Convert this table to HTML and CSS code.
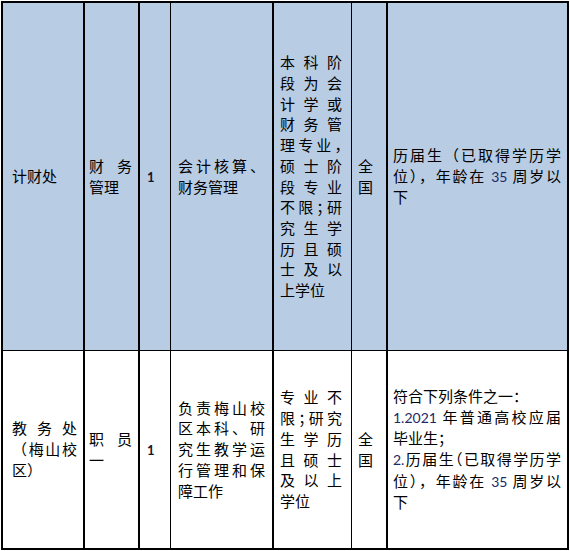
FILE: index.html
```html
<!DOCTYPE html>
<html lang="zh-CN">
<head>
<meta charset="utf-8">
<title>岗位表</title>
<link rel="stylesheet" href="styles.css">
</head>
<body>
<table class="sheet">
  <tr class="row-a">
    <td class="c1"><span class="l">计财处</span></td>
    <td class="c2"><span class="l j">财务</span><span class="l">管理</span></td>
    <td class="c3"><span class="one">1</span></td>
    <td class="c4"><span class="l j">会计核算、</span><span class="l">财务管理</span></td>
    <td class="c5">
      <span class="l j">本科阶</span>
      <span class="l j">段为会</span>
      <span class="l j">计学或</span>
      <span class="l j">财务管</span>
      <span class="l j">理专业<span class="h">，</span></span>
      <span class="l j">硕士阶</span>
      <span class="l j">段专业</span>
      <span class="l j">不限<span class="h">；</span>研</span>
      <span class="l j">究生学</span>
      <span class="l j">历且硕</span>
      <span class="l j">士及以</span>
      <span class="l">上学位</span>
    </td>
    <td class="c6"><span class="l">全</span><span class="l">国</span></td>
    <td class="c7">
      <span class="l j">历届生（已取得学历学</span>
      <span class="l j">位），年龄在 <span class="n">35</span> 周岁以</span>
      <span class="l">下</span>
    </td>
  </tr>
  <tr class="row-b">
    <td class="c1"><span class="l j">教务处</span><span class="l j">（梅山校</span><span class="l">区）</span></td>
    <td class="c2"><span class="l j">职员</span><span class="l">一</span></td>
    <td class="c3"><span class="one">1</span></td>
    <td class="c4">
      <span class="l j">负责梅山校</span>
      <span class="l j">区本科、研</span>
      <span class="l j">究生教学运</span>
      <span class="l j">行管理和保</span>
      <span class="l">障工作</span>
    </td>
    <td class="c5">
      <span class="l j">专业不</span>
      <span class="l j">限<span class="h">；</span>研究</span>
      <span class="l j">生学历</span>
      <span class="l j">且硕士</span>
      <span class="l j">及以上</span>
      <span class="l">学位</span>
    </td>
    <td class="c6"><span class="l">全</span><span class="l">国</span></td>
    <td class="c7">
      <span class="l">符合下列条件之一：</span>
      <span class="l j"><span class="n">1.2021</span> 年普通高校应届</span>
      <span class="l">毕业生；</span>
      <span class="l j"><span class="n">2.</span>历届生<span class="h">（</span>已取得学历学</span>
      <span class="l j">位），年龄在 <span class="n">35</span> 周岁以</span>
      <span class="l">下</span>
    </td>
  </tr>
</table>
</body>
</html>
```
FILE: styles.css
```css
html, body {
  margin: 0;
  background: #ffffff;
}

body {
  padding: 1px 0 0 1px;
  font-family: "Noto Sans CJK SC", "Noto Sans", sans-serif;
  font-size: 15px;
  line-height: 20.7px;
  color: #000000;
}

.sheet {
  border-collapse: separate;
  border-spacing: 0;
  table-layout: fixed;
  width: 568px;
  border-left: 2px solid #000;
  border-top: 2px solid #000;
}

.sheet td {
  box-sizing: border-box;
  vertical-align: middle;
  padding: 0;
  border-right: 2px solid #000;
  border-bottom: 1px solid #000;
}

.row-a td {
  background: #b8cce4;
  height: 348px;
}

.row-b td {
  background: #ffffff;
  height: 199px;
  border-bottom-width: 2px;
}

.c1 { width: 82px; padding: 0 6px 0 9px !important; }
.c2 { width: 55px; padding: 0 6px 0 4px !important; }
.c3 { width: 31px; padding: 0 0 0 7px !important; border-right-width: 1px !important; }
.c4 { width: 103px; padding: 0 7px 0 7px !important; }
.c5 { width: 78px; padding: 0 9px 0 6px !important; border-right-width: 1px !important; }
.c6 { width: 36px; padding: 0 0 0 6px !important; }
.c7 { width: 181px; padding: 0 6px 0 5px !important; }

.l {
  display: block;
  line-height: 20.7px;
}

.j {
  text-align: justify;
  text-align-last: justify;
}

.h {
  font-feature-settings: "halt";
}

.n {
  font-family: Lato, "Liberation Sans", sans-serif;
  font-size: 14px;
  color: #1c2a66;
}

.one {
  font-family: Lato, "Liberation Sans", sans-serif;
  font-weight: 700;
  font-size: 13px;
  color: #14142e;
}
```
